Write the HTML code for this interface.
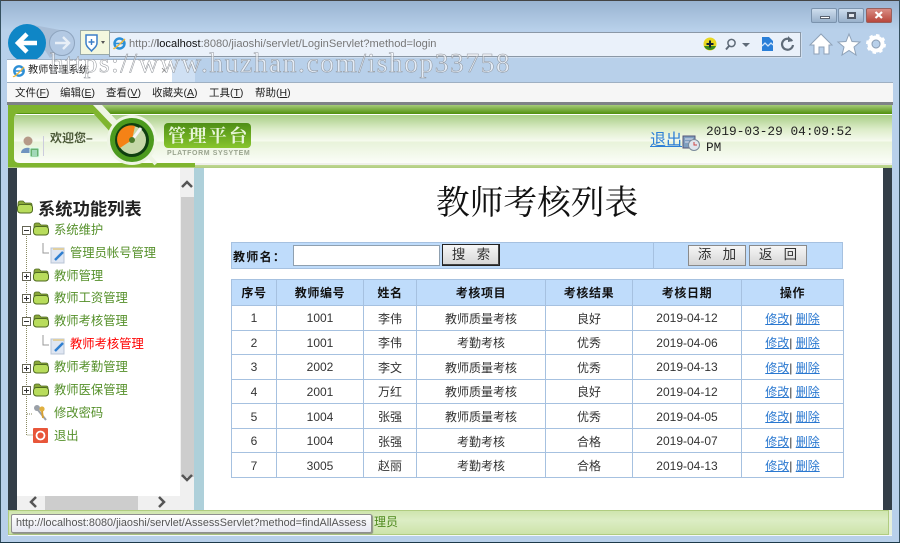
<!DOCTYPE html>
<html>
<head>
<meta charset="utf-8">
<style>
html,body{margin:0;padding:0;width:900px;height:543px;overflow:hidden;background:#b9d1ea;font-family:"Liberation Sans","Noto Sans CJK SC",sans-serif;font-size:12px;color:#222}
.a{position:absolute}
#w{position:relative;width:900px;height:543px;overflow:hidden}
.t{position:absolute;white-space:nowrap;line-height:14px}
.g{color:#55902a;font-size:12.3px}
table{position:absolute;left:231px;top:279px;width:612px;height:199px;border-collapse:collapse;table-layout:fixed;font-size:12px}
td,th{border:1px solid #a6c1e0;text-align:center;padding:0;color:#333}
td{padding-top:1px}
th{background:#bfdcfb;color:#111;font-weight:bold;letter-spacing:.6px;height:25px}
td a{color:#2a78d0;text-decoration:underline}
.btn{position:absolute;height:21px;background:linear-gradient(#f6f6f6,#d6d6d6);border:1px solid #8a8a8a;box-sizing:border-box;text-align:center;font-size:13.5px;line-height:18px;color:#333;font-family:"Liberation Sans","Noto Sans CJK SC",sans-serif}
svg{position:absolute;overflow:visible}
.m{font-size:10.5px;top:86px;color:#222}
</style>
</head>
<body>
<div id="w">
<!-- window chrome -->
<div class="a" style="left:0;top:0;width:900px;height:543px;background:linear-gradient(#98b2d0 0,#b8d0ea 30px,#b8d0ea 100%)"></div>
<div class="a" style="left:0;top:0;width:900px;height:1px;background:#444"></div>
<div class="a" style="left:0;top:0;width:1px;height:543px;background:#35505f"></div>
<div class="a" style="left:899px;top:0;width:1px;height:543px;background:#35505f"></div>
<div class="a" style="left:0;top:542px;width:900px;height:1px;background:#1d3a4a"></div>
<!-- caption buttons -->
<div class="a" style="left:811px;top:8px;width:24px;height:13px;border:1px solid #7b93ad;border-radius:2px;background:linear-gradient(#cfdeee,#99b1cb)"></div>
<div class="a" style="left:820px;top:16px;width:8px;height:1px;background:#fff;border:1px solid #5a6270"></div>
<div class="a" style="left:838px;top:8px;width:24px;height:13px;border:1px solid #7b93ad;border-radius:2px;background:linear-gradient(#cfdeee,#99b1cb)"></div>
<div class="a" style="left:847px;top:12px;width:5px;height:3px;border:2px solid #4f5866;background:#e4e8ee"></div>
<div class="a" style="left:866px;top:8px;width:24px;height:13px;border:1px solid #98605c;border-radius:2px;background:linear-gradient(#d98c84,#b8473c)"></div>
<svg style="left:874px;top:11px" width="10" height="8"><path d="M1.500 1 L8 7 M8 1 L1.500 7" stroke="#fff" stroke-width="2.200"/></svg>

<!-- back / forward -->
<svg style="left:0;top:0" width="130" height="70">
<path d="M28 24 L60 30 L72 44 L50 58 Z" fill="#a8bdd6"/>
<circle cx="27" cy="43" r="19" fill="#0f86c6"/>
<path d="M18 43 H37 M27 34 L18 43 L27 52" stroke="#fff" stroke-width="4.500" fill="none"/>
<circle cx="62" cy="43" r="12.500" fill="#b3c9e3" stroke="#8ea4be" stroke-width="1"/>
<path d="M55 43 H68 M63 37 L69 43 L63 49" stroke="#e8eff7" stroke-width="2.400" fill="none"/>
</svg>
<!-- address bar -->
<div class="a" style="left:109px;top:32px;width:690px;height:23px;background:#eaf1fa;border:1px solid #8b98a6;box-shadow:1px 1px 0 #cfdeef"></div>
<div class="t" style="left:129px;top:37px;font-size:11.100px;color:#777">http://<span style="color:#111">localhost</span>:8080/jiaoshi/servlet/LoginServlet?method=login</div>
<!-- shield -->
<div class="a" style="left:80px;top:30px;width:28px;height:23px;background:#f3f7de;border:1px solid #9aa"></div>
<svg style="left:85px;top:34px" width="14" height="18"><path d="M1 1 H12 V9 C12 13 8 15 6.500 17 C5 15 1 13 1 9 Z" fill="#fff" stroke="#3c7fc8" stroke-width="1.500"/><path d="M6.500 5 V11 M3.500 8 H9.500" stroke="#3c7fc8" stroke-width="1.400"/></svg>
<div class="a" style="left:101px;top:41px;border:2.500px solid transparent;border-top:3px solid #555"></div>
<svg style="left:112px;top:36px" width="15" height="15"><circle cx="7.500" cy="7.500" r="5" fill="none" stroke="#2d8fd6" stroke-width="2.400"/><path d="M3 7.500 H12" stroke="#2d8fd6" stroke-width="1.600"/><path d="M2 12 C1 14 5 11 13 3" stroke="#f0b83a" stroke-width="1.400" fill="none"/></svg>
<svg style="left:703px;top:37px" width="14" height="14"><circle cx="7" cy="7" r="6.500" fill="#e8d820"/><path d="M1 9 A6.500 6.500 0 0 0 13 9 Z" fill="#3a8a1e"/><path d="M3.500 7 H10.500 M7 3.500 V10.500" stroke="#123" stroke-width="2"/></svg>
<svg style="left:724px;top:38px" width="13" height="13"><circle cx="7.500" cy="5" r="3.600" fill="none" stroke="#5f6b78" stroke-width="1.500"/><path d="M5 8 L2 11.500" stroke="#5f6b78" stroke-width="2"/></svg>
<div class="a" style="left:742px;top:43px;border:4px solid transparent;border-top:4px solid #5f6b78"></div>
<svg style="left:761px;top:36px" width="13" height="16"><path d="M1 1 H8 L12 5 V15 H1 Z" fill="#2a7fd8"/><path d="M1 10 L4 7 L7 10 L10 7 L12 9" stroke="#cfe4fa" stroke-width="1.300" fill="none"/></svg>
<svg style="left:780px;top:35px" width="15" height="17"><path d="M12 6 A5.500 5.500 0 1 0 13 10" stroke="#5f6b78" stroke-width="2.200" fill="none"/><path d="M8 1 L13 6 L8 7 Z" fill="#5f6b78"/></svg>
<!-- home star gear -->
<svg style="left:810px;top:32px" width="80" height="24">
<path d="M11 2 L22 13 H19 V22 H14 V15 H9 V22 H4 V13 H0 Z" fill="#fff" stroke="#8fa2b8" stroke-width="1"/>
<path d="M39 2 L42 9.500 L50 10 L44 15 L46 23 L39 18.500 L32 23 L34 15 L28 10 L36 9.500 Z" fill="#fff" stroke="#8fa2b8" stroke-width="1"/>
<circle cx="66" cy="12" r="6.500" fill="none" stroke="#fff" stroke-width="4"/>
<circle cx="66" cy="12" r="8.700" fill="none" stroke="#fff" stroke-width="2.500" stroke-dasharray="3.400 3.400"/>
<circle cx="66" cy="12" r="4" fill="none" stroke="#8b9db2" stroke-width="1"/>
</svg>
<!-- tab -->
<div class="a" style="left:172px;top:60px;width:23px;height:22px;background:#cfe0f3"></div>
<div class="a" style="left:7px;top:59px;width:165px;height:24px;background:#fff;border-top:1px solid #9fb2c8;box-sizing:border-box"></div>
<svg style="left:12px;top:64px" width="14" height="14"><circle cx="7" cy="7" r="4.700" fill="none" stroke="#2d8fd6" stroke-width="2.400"/><path d="M3 7 H11" stroke="#2d8fd6" stroke-width="1.500"/><path d="M1.500 12 C1 14 5 11 12 3" stroke="#f0b83a" stroke-width="1.300" fill="none"/></svg>
<div class="t" style="left:28px;top:64px;font-size:10.200px;color:#222">教师管理系统</div>
<div class="t" style="left:161px;top:64px;font-size:11px;color:#888">×</div>
<!-- menu bar -->
<div class="a" style="left:7px;top:83px;width:886px;height:20px;background:#f6f6f6"></div>
<div class="a" style="left:7px;top:82px;width:886px;height:1px;background:#9fb0c2"></div>
<div class="a" style="left:7px;top:102px;width:886px;height:3px;background:#7e8286"></div>
<div class="t m" style="left:15px">文件(<u>F</u>)</div>
<div class="t m" style="left:60px">编辑(<u>E</u>)</div>
<div class="t m" style="left:106px">查看(<u>V</u>)</div>
<div class="t m" style="left:152px">收藏夹(<u>A</u>)</div>
<div class="t m" style="left:209px">工具(<u>T</u>)</div>
<div class="t m" style="left:255px">帮助(<u>H</u>)</div>

<!-- header -->
<div class="a" style="left:8px;top:105px;width:884px;height:9px;background:linear-gradient(#a6cc78,#4f8f0c)"></div>
<div class="a" style="left:8px;top:114px;width:884px;height:1px;background:#fff"></div>
<div class="a" style="left:8px;top:115px;width:884px;height:48px;background:linear-gradient(#a9cf86 0,#dcecc8 14px,#f6faef 26px,#e8f3da 27px,#fbfdf8 100%)"></div>
<div class="a" style="left:8px;top:163px;width:884px;height:2px;background:#f0f0ec"></div>
<div class="a" style="left:8px;top:165px;width:884px;height:3px;background:linear-gradient(#c0d892,#b0cc80)"></div>
<svg style="left:0;top:0" width="270" height="170">
<path d="M8 105 H93 L116 128 L112 134 L93 113 H20 Q14 113 14 119 V158 Q14 163 20 163 H195 V167 H8 Z" fill="#7fb52e"/>
<path d="M93 105 H102 L120 124 L115 128 Z" fill="#eef5e4"/>
<path d="M148 155 L156 164" stroke="#eef5e4" stroke-width="4"/>
</svg>
<div class="a" style="left:43px;top:136px;width:1px;height:20px;background:#ccd"></div>
<svg style="left:20px;top:135px" width="20" height="23"><circle cx="8" cy="6" r="4.500" fill="#b59a88"/><path d="M1 18 C1 11 14 11 15 18 Z" fill="#6f93bf"/><rect x="10" y="13" width="9" height="9" rx="1" fill="#68b070" stroke="#dfe"/><path d="M12 16 H17 M12 18 H17 M12 20 H17" stroke="#dff" stroke-width=".9"/></svg>
<div class="t" style="left:50px;top:131px;font-size:12px;font-weight:bold;color:#4c5a38">欢迎您–</div>
<!-- logo -->
<svg style="left:106px;top:115px" width="54" height="50">
<circle cx="26" cy="25" r="25" fill="#eef5e4"/>
<circle cx="26" cy="25" r="22" fill="#4c9a1e"/>
<circle cx="26" cy="25" r="17" fill="#0f3f10"/>
<circle cx="26" cy="25" r="14" fill="#c6d8a8"/>
<path d="M26 25 L14 33 A14 14 0 0 1 29 11 Z" fill="#f58216"/>
<path d="M26 25 L35 13" stroke="#f5f5f5" stroke-width="3"/>
<circle cx="26" cy="25" r="3" fill="#4c7a2c"/>
</svg>
<div class="a" style="left:164px;top:123px;width:87px;height:25px;border-radius:4px;background:linear-gradient(#4f8f16,#87c52c)"></div>
<div class="t" style="left:168px;top:124px;font-family:'Noto Serif CJK SC',serif;font-size:18px;font-weight:bold;letter-spacing:2.400px;line-height:23px;color:#e8f5d8">管理平台</div>
<div class="t" style="left:167px;top:150px;font-size:7px;font-weight:bold;letter-spacing:.6px;color:#9aa48f;line-height:8px">PLATFORM SYSYTEM</div>
<!-- logout + date -->
<a class="t" style="left:650px;top:132px;font-size:16px;line-height:18px;color:#2d7fd6;text-decoration:underline">退出</a>
<svg style="left:683px;top:135px" width="18" height="17"><rect x="0" y="1" width="12" height="12" fill="#7e9fc0" stroke="#557"/><path d="M2 4 H10 M2 7 H10" stroke="#dde" stroke-width="1"/><circle cx="11" cy="10" r="5.500" fill="#dfe6ee" stroke="#7a8a9a"/><path d="M11 7 V10 H14" stroke="#c44" stroke-width="1" fill="none"/></svg>
<div class="t" style="left:706px;top:124px;width:160px;font-family:'Liberation Mono',monospace;font-size:12.800px;line-height:16px;white-space:normal;color:#222">2019-03-29 04:09:52 PM</div>

<!-- body layout -->
<div class="a" style="left:8px;top:168px;width:884px;height:342px;background:#333e48"></div>
<div class="a" style="left:17px;top:168px;width:163px;height:328px;background:#fff"></div>
<div class="a" style="left:180px;top:168px;width:14px;height:342px;background:#f0f0f0"></div>
<div class="a" style="left:181px;top:197px;width:13px;height:280px;background:#cdcdcd"></div>
<div class="a" style="left:17px;top:496px;width:177px;height:14px;background:#f0f0f0"></div>
<div class="a" style="left:45px;top:496px;width:93px;height:14px;background:#cdcdcd"></div>
<div class="a" style="left:194px;top:168px;width:10px;height:342px;background:#aed0da"></div>
<div class="a" style="left:204px;top:168px;width:679px;height:342px;background:#fff"></div>
<svg style="left:0;top:0" width="200" height="520">
<path d="M182 187 L187 182 L192 187" stroke="#555" stroke-width="2.500" fill="none"/>
<path d="M182 475 L187 480 L192 475" stroke="#555" stroke-width="2.500" fill="none"/>
<path d="M36 497 L31 502 L36 507" stroke="#555" stroke-width="2.500" fill="none"/>
<path d="M159 497 L164 502 L159 507" stroke="#555" stroke-width="2.500" fill="none"/>
<path d="M26.500 236 V435 H33 M27 414 H33" stroke="#8a8a60" stroke-width="1" stroke-dasharray="1 1" fill="none"/>
<path d="M43 243 V253 H49 M43 335 V345 H49" stroke="#999" stroke-width="1" fill="none"/>
</svg>
<!-- sidebar folders -->
<svg style="left:0;top:0" width="200" height="460">
<defs><g id="f"><path d="M1 4 Q1 1 3 1 H6 L8 3 H13 Q15 3 15 5 V6 H1 Z" fill="#8aa83a" stroke="#4f6a20" stroke-width=".8"/><rect x="0.500" y="4.500" width="15" height="8.500" rx="3" fill="#b8dc5c" stroke="#4f6a20"/></g>
<g id="p"><rect x=".5" y=".5" width="8" height="8" fill="#fff" stroke="#665"/><path d="M2 4.500 H7" stroke="#333"/></g>
<g id="pp"><rect x=".5" y=".5" width="8" height="8" fill="#fff" stroke="#665"/><path d="M2 4.500 H7 M4.500 2 V7" stroke="#333"/></g>
<g id="d"><rect x="1" y="1" width="13" height="15" fill="#dfe6f2" stroke="#b9c4d4"/><path d="M3 2 H14" stroke="#e0cfa0" stroke-width="2"/><path d="M5 13 L13 5" stroke="#2f7fd0" stroke-width="2.500"/></g></defs>
<use href="#f" x="17" y="200"/>
<use href="#p" x="22" y="226"/><use href="#f" x="33" y="222"/>
<use href="#d" x="50" y="247"/>
<use href="#pp" x="22" y="272"/><use href="#f" x="33" y="268"/>
<use href="#pp" x="22" y="294"/><use href="#f" x="33" y="291"/>
<use href="#p" x="22" y="317"/><use href="#f" x="33" y="314"/>
<use href="#d" x="50" y="338"/>
<use href="#pp" x="22" y="364"/><use href="#f" x="33" y="360"/>
<use href="#pp" x="22" y="386"/><use href="#f" x="33" y="383"/>
<circle cx="37" cy="408" r="3" fill="#9aa0a8"/><path d="M38 410 L46 420" stroke="#9aa0a8" stroke-width="2"/>
<circle cx="42" cy="409" r="2.600" fill="#e0b040"/><path d="M42 411 L43 418" stroke="#d8a030" stroke-width="1.800"/>
<rect x="33" y="428" width="15" height="15" rx="1" fill="#e8563a"/><circle cx="40.500" cy="435.500" r="4" fill="none" stroke="#fff" stroke-width="1.800"/>
</svg>
<div class="t" style="left:38px;top:200px;font-size:17.300px;line-height:18px;font-weight:bold;color:#222">系统功能列表</div>
<div class="t g" style="left:54px;top:223px">系统维护</div>
<div class="t g" style="left:70px;top:246px">管理员帐号管理</div>
<div class="t g" style="left:54px;top:269px">教师管理</div>
<div class="t g" style="left:54px;top:291px">教师工资管理</div>
<div class="t g" style="left:54px;top:314px">教师考核管理</div>
<div class="t" style="left:70px;top:337px;color:#f00;font-size:12.300px">教师考核管理</div>
<div class="t g" style="left:54px;top:360px">教师考勤管理</div>
<div class="t g" style="left:54px;top:383px">教师医保管理</div>
<div class="t g" style="left:54px;top:406px">修改密码</div>
<div class="t g" style="left:54px;top:429px">退出</div>

<!-- main -->
<div class="t" style="left:436px;top:180px;font-family:'Noto Serif CJK SC',serif;font-size:33.700px;line-height:40px;color:#111">教师考核列表</div>
<div class="a" style="left:231px;top:242px;width:612px;height:27px;background:#bfdcfb;border:1px solid #a6c1e0;box-sizing:border-box"></div>
<div class="a" style="left:653px;top:243px;width:1px;height:25px;background:#a6c1e0"></div>
<div class="t" style="left:233px;top:250px;font-weight:bold;letter-spacing:1.300px;color:#111">教师名：</div>
<div class="a" style="left:293px;top:245px;width:147px;height:21px;background:#fff;border:1px solid #8fa0b0;box-sizing:border-box"></div>
<div class="btn" style="left:442px;top:244px;width:58px;height:22px;border:1px solid #222;box-shadow:inset -1px -1px 0 #444;line-height:19px">搜&nbsp;&nbsp;&nbsp;索</div>
<div class="btn" style="left:688px;top:245px;width:58px">添&nbsp;&nbsp;&nbsp;加</div>
<div class="btn" style="left:749px;top:245px;width:58px">返&nbsp;&nbsp;&nbsp;回</div>

<table>
<colgroup><col style="width:45px"><col style="width:87px"><col style="width:53px"><col style="width:129px"><col style="width:87px"><col style="width:109px"><col style="width:102px"></colgroup>
<tr><th>序号</th><th>教师编号</th><th>姓名</th><th>考核项目</th><th>考核结果</th><th>考核日期</th><th>操作</th></tr>
<tr><td>1</td><td>1001</td><td>李伟</td><td>教师质量考核</td><td>良好</td><td>2019-04-12</td><td><a>修改</a>| <a>删除</a></td></tr>
<tr><td>2</td><td>1001</td><td>李伟</td><td>考勤考核</td><td>优秀</td><td>2019-04-06</td><td><a>修改</a>| <a>删除</a></td></tr>
<tr><td>3</td><td>2002</td><td>李文</td><td>教师质量考核</td><td>优秀</td><td>2019-04-13</td><td><a>修改</a>| <a>删除</a></td></tr>
<tr><td>4</td><td>2001</td><td>万红</td><td>教师质量考核</td><td>良好</td><td>2019-04-12</td><td><a>修改</a>| <a>删除</a></td></tr>
<tr><td>5</td><td>1004</td><td>张强</td><td>教师质量考核</td><td>优秀</td><td>2019-04-05</td><td><a>修改</a>| <a>删除</a></td></tr>
<tr><td>6</td><td>1004</td><td>张强</td><td>考勤考核</td><td>合格</td><td>2019-04-07</td><td><a>修改</a>| <a>删除</a></td></tr>
<tr><td>7</td><td>3005</td><td>赵丽</td><td>考勤考核</td><td>合格</td><td>2019-04-13</td><td><a>修改</a>| <a>删除</a></td></tr>
</table>

<!-- footer -->
<div class="a" style="left:8px;top:510px;width:881px;height:25px;background:linear-gradient(#cfe5ae,#dcedc4 40%,#cde3aa);border:1px solid #b0cc80;box-sizing:border-box"></div>
<div class="a" style="left:889px;top:510px;width:3px;height:25px;background:#e6f0dc"></div>
<div class="a" style="left:8px;top:535px;width:884px;height:1px;background:#f4f8fc"></div>
<div class="t" style="left:374px;top:515px;color:#4f8a1e;font-size:12px">理员</div>
<div class="a" style="left:11px;top:514px;width:361px;height:19px;background:linear-gradient(#fff,#e6e7f0);border:1px solid #8f8f8f;border-radius:2px;box-sizing:border-box;box-shadow:1px 1px 1px #8a8f80;font-size:10.850px;line-height:17px;padding-left:4px;color:#555;white-space:nowrap">http://localhost:8080/jiaoshi/servlet/AssessServlet?method=findAllAssess</div>

<!-- watermark -->
<div class="t" style="left:50px;top:47px;font-family:'Liberation Serif',serif;font-size:27.500px;line-height:32px;letter-spacing:1.530px;color:rgba(255,255,255,.6);-webkit-text-stroke:.5px #90949a">https://www.huzhan.com/ishop33758</div>
</div>
</body>
</html>
